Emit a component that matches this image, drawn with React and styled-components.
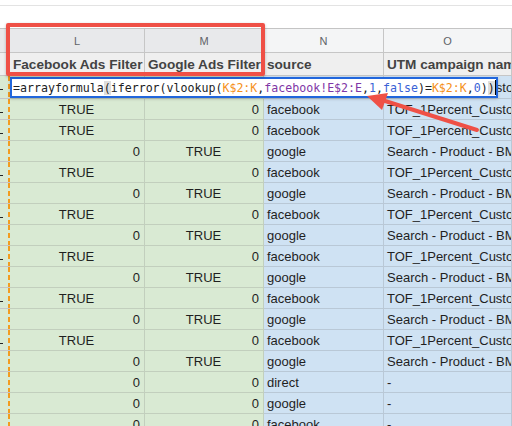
import React from 'react';
import styled, { createGlobalStyle, css } from 'styled-components';

const GlobalStyle = createGlobalStyle`
  html, body {
    margin: 0;
    padding: 0;
    background: #fff;
    overflow: hidden;
  }
`;

const COLS = '10px 135px 119px 120px 1fr';

const rows = [
  ['TRUE', '0', 'facebook', 'TOF_1Percent_CustomAudience'],
  ['TRUE', '0', 'facebook', 'TOF_1Percent_CustomAudience'],
  ['0', 'TRUE', 'google', 'Search - Product - BMS Brand'],
  ['TRUE', '0', 'facebook', 'TOF_1Percent_CustomAudience'],
  ['0', 'TRUE', 'google', 'Search - Product - BMS Brand'],
  ['TRUE', '0', 'facebook', 'TOF_1Percent_CustomAudience'],
  ['0', 'TRUE', 'google', 'Search - Product - BMS Brand'],
  ['TRUE', '0', 'facebook', 'TOF_1Percent_CustomAudience'],
  ['0', 'TRUE', 'google', 'Search - Product - BMS Brand'],
  ['TRUE', '0', 'facebook', 'TOF_1Percent_CustomAudience'],
  ['0', 'TRUE', 'google', 'Search - Product - BMS Brand'],
  ['TRUE', '0', 'facebook', 'TOF_1Percent_CustomAudience'],
  ['0', 'TRUE', 'google', 'Search - Product - BMS Brand'],
  ['0', '0', 'direct', '-'],
  ['0', '0', 'google', '-'],
  ['0', '0', 'facebook', '-'],
];

const App = () => (
  <Page>
    <GlobalStyle />
    <Toolbar />
    <Spacer />
    <Row $height={24}>
      <LetterCell $active />
      <LetterCell $active>L</LetterCell>
      <LetterCell $active>M</LetterCell>
      <LetterCell>N</LetterCell>
      <LetterCell>O</LetterCell>
    </Row>
    <Row $height={23}>
      <TitleCell />
      <TitleCell>Facebook Ads Filter</TitleCell>
      <TitleCell>Google Ads Filter</TitleCell>
      <TitleCell>source</TitleCell>
      <TitleCell>UTM campaign name</TitleCell>
    </Row>
    {/* row under the cell editor */}
    <DataRow values={rows[0]} height={23} />
    {rows.map((r, i) => (
      <DataRow key={i} values={r} height={21} />
    ))}

    <Editor>
      <Formula>
        =arrayformula<Match>(</Match>iferror(vlookup(
        <Ref>K$2:K</Ref>,<Sheet>facebook!E$2:E</Sheet>,<Num>1</Num>,<Num>false</Num>)=
        <Ref>K$2:K</Ref>,<Num>0</Num>)<Match>)</Match>
        <Caret />
      </Formula>
    </Editor>

    <Highlight />

    <Arrow width="512" height="426" viewBox="0 0 512 426">
      <line x1="477" y1="130" x2="382" y2="100" stroke="#ef5046" strokeWidth="4" strokeLinecap="round" />
      <polygon points="367,96 388,93 382,110" fill="#ef5046" />
    </Arrow>
  </Page>
);

const DataRow = ({ values, height }) => {
  const [l, m, src, camp] = values;
  return (
    <Row $height={height}>
      <KCell>{l === 'TRUE' && <KMark />}</KCell>
      <Cell $tone="green" $align={l === 'TRUE' ? 'center' : 'right'}>{l}</Cell>
      <Cell $tone="green" $align={m === 'TRUE' ? 'center' : 'right'}>{m}</Cell>
      <Cell $tone="blue">{src}</Cell>
      <Cell $tone="blue">{camp}</Cell>
    </Row>
  );
};

const Page = styled.div`
  position: relative;
  width: 512px;
  height: 426px;
  overflow: hidden;
  background: #fff;
  font-family: "Liberation Sans", Arial, sans-serif;
`;

const Toolbar = styled.div`
  height: 5px;
  border-bottom: 1px solid #e3e3e3;
`;

const Spacer = styled.div`
  height: 22px;
  border-bottom: 1px solid #c4c4c4;
`;

const Row = styled.div`
  display: grid;
  grid-template-columns: ${COLS};
  height: ${(p) => p.$height}px;
`;

const cellBase = css`
  box-sizing: border-box;
  border-right: 1px solid #c6c6c6;
  border-bottom: 1px solid #c6c6c6;
  white-space: nowrap;
  overflow: hidden;
  display: flex;
  align-items: center;
`;

const LetterCell = styled.div`
  ${cellBase}
  justify-content: center;
  background: ${(p) => (p.$active ? '#e8e9eb' : '#f4f5f6')};
  color: #5f6368;
  font-size: 11px;
`;

const TitleCell = styled.div`
  ${cellBase}
  background: #efefef;
  color: #434343;
  font-weight: bold;
  font-size: 13.6px;
  padding-left: 3px;
`;

const KCell = styled.div`
  ${cellBase}
  position: relative;
  background: #d9ead3;
  border-right: none;
  background-image: repeating-linear-gradient(
    to bottom,
    #f39c1f 0 5px,
    transparent 5px 8px
  );
  background-size: 2px 100%;
  background-repeat: no-repeat;
  background-position: 8px 0;
`;

const KMark = styled.span`
  position: absolute;
  left: 0;
  top: 13px;
  width: 3px;
  height: 1px;
  background: #222;
`;

const Cell = styled.div`
  ${cellBase}
  background: ${(p) => (p.$tone === 'green' ? '#d9ead3' : '#cfe2f3')};
  border-color: ${(p) => (p.$tone === 'green' ? '#c2cfbd' : '#b9c8d6')};
  justify-content: ${(p) =>
    p.$align === 'center' ? 'center' : p.$align === 'right' ? 'flex-end' : 'flex-start'};
  padding: 0 4px 0 3px;
  font-size: 13px;
  color: #1f1f1f;
`;

const Editor = styled.div`
  position: absolute;
  left: 10px;
  top: 77px;
  width: 488px;
  height: 21px;
  box-sizing: border-box;
  border: 2px solid #2166dc;
  background: #fff;
  display: flex;
  align-items: center;
  padding-left: 1px;
  box-shadow: 0 1px 3px rgba(0, 0, 0, 0.2);
`;

const Formula = styled.div`
  font-family: "DejaVu Sans Mono", "Liberation Mono", monospace;
  font-size: 11.6px;
  color: #202124;
  white-space: pre;
  display: flex;
  align-items: center;
`;

const Ref = styled.span`
  color: #f5911a;
`;

const Sheet = styled.span`
  color: #8036a6;
`;

const Num = styled.span`
  color: #3a62d6;
`;

const Match = styled.span`
  background: #dedede;
`;

const Caret = styled.span`
  display: inline-block;
  width: 1px;
  height: 15px;
  background: #000;
`;

const Highlight = styled.div`
  position: absolute;
  left: 6px;
  top: 23px;
  width: 259px;
  height: 53px;
  box-sizing: border-box;
  border: 4px solid #ef5046;
  border-radius: 2px;
  box-shadow: 0 1px 3px rgba(0, 0, 0, 0.25);
`;

const Arrow = styled.svg`
  position: absolute;
  left: 0;
  top: 0;
  pointer-events: none;
`;

export default App;
